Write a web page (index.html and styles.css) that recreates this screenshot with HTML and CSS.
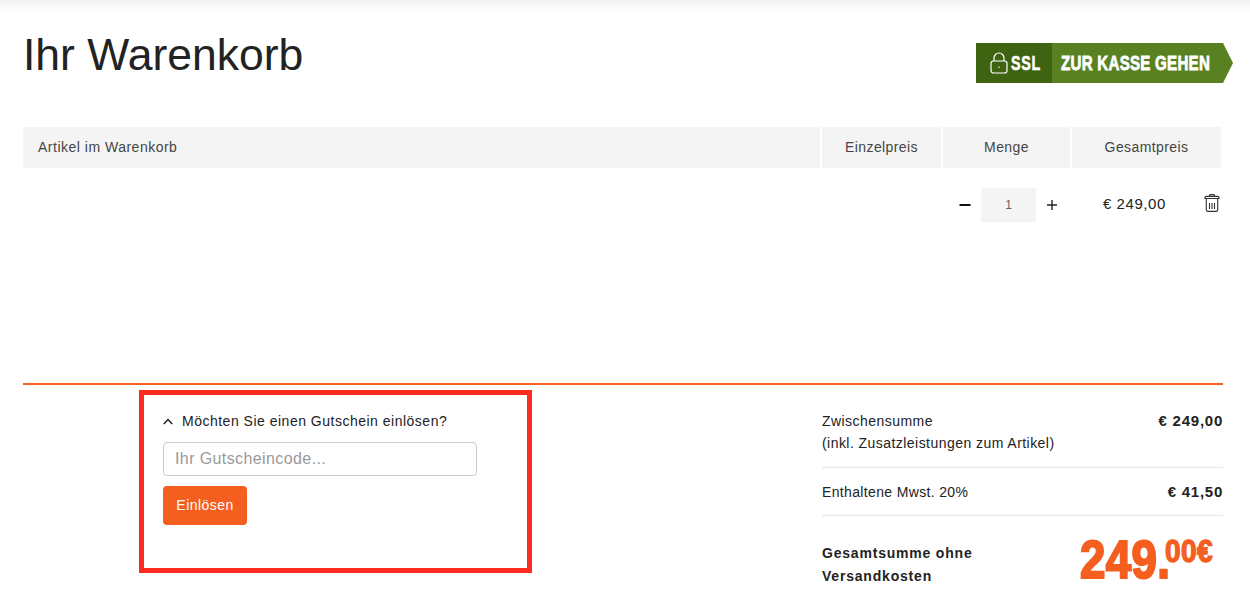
FILE: index.html
```html
<!DOCTYPE html>
<html lang="de">
<head>
<meta charset="utf-8">
<title>Ihr Warenkorb</title>
<link rel="stylesheet" href="styles.css">
</head>
<body>
<div class="topbar"></div>
<main class="page">
  <header class="head">
    <h1 class="title">Ihr Warenkorb</h1>
    <a class="checkout" href="#">
      <span class="ssl">
        <svg class="lock" width="18" height="22" viewBox="0 0 18 22" fill="none" stroke="#fff" stroke-width="1.2">
          <rect x="1" y="9" width="16" height="12" rx="2.5"/>
          <path d="M4 9V6a5 5 0 0 1 10 0v3"/>
          <rect x="8.5" y="14.5" width="1" height="1.5" fill="#fff" stroke="none"/>
        </svg>
        <span class="heavy ssl-text">SSL</span>
      </span>
      <span class="go"><span class="heavy go-text">ZUR KASSE GEHEN</span></span>
    </a>
  </header>

  <div class="thead">
    <div class="th th-item">Artikel im Warenkorb</div>
    <div class="th th-unit">Einzelpreis</div>
    <div class="th th-qty">Menge</div>
    <div class="th th-total">Gesamtpreis</div>
  </div>

  <div class="row">
    <div class="qty">
      <svg class="qty-btn" width="12" height="12" viewBox="0 0 12 12"><path d="M0.5 6h11" stroke="#111" stroke-width="2"/></svg>
      <span class="qty-val">1</span>
      <svg class="qty-btn" width="12" height="12" viewBox="0 0 12 12"><path d="M1 6h10M6 1v10" stroke="#222" stroke-width="1.4"/></svg>
    </div>
    <div class="row-price">€ 249,00</div>
    <svg class="trash" width="16" height="18" viewBox="0 0 16 18" fill="none" stroke="#333" stroke-width="1.1">
      <path d="M1 4.500h14V3.700c0-.8-.6-1.300-1.300-1.300H2.300C1.600 2.400 1 2.900 1 3.700z"/>
      <path d="M5.500 2.400V1.500C5.500 1 6 .6 6.500 .6h3c.5 0 1 .4 1 .9v.9"/>
      <path d="M2.300 4.500v11.200c0 1 .7 1.700 1.700 1.700h8c1 0 1.700-.7 1.700-1.700V4.500"/>
      <path d="M5.500 9v6M8 9v6M10.500 9v6"/>
    </svg>
  </div>

  <section class="bottom">
    <div class="coupon">
      <div class="coupon-label">
        <svg width="10" height="7" viewBox="0 0 10 7" fill="none" stroke="#222" stroke-width="1.500"><path d="M0.800 6L5 1.500 9.200 6"/></svg>
        <span>Möchten Sie einen Gutschein einlösen?</span>
      </div>
      <input class="coupon-input" type="text" placeholder="Ihr Gutscheincode...">
      <button class="coupon-btn" type="button">Einlösen</button>
    </div>

    <div class="summary">
      <div class="sum-row sum-sub">
        <div>Zwischensumme<br>(inkl. Zusatzleistungen zum Artikel)</div>
        <strong class="sum-val">€ 249,00</strong>
      </div>
      <div class="sum-row sum-tax">
        <div>Enthaltene Mwst. 20%</div>
        <strong class="sum-val">€ 41,50</strong>
      </div>
      <div class="sum-row sum-total">
        <strong class="total-label">Gesamtsumme ohne<br>Versandkosten</strong>
        <div class="big"><span class="heavy big-int">249.</span><span class="heavy big-dec">00€</span></div>
      </div>
    </div>
  </section>
</main>
</body>
</html>
```
FILE: styles.css
```css
* { box-sizing: border-box; }
html, body { margin: 0; padding: 0; }
body {
  width: 1250px;
  height: 608px;
  overflow: hidden;
  background: #fff;
  color: #222;
  font-family: "Liberation Sans", Arial, sans-serif;
  font-size: 14px;
}
.topbar { height: 12px; margin-bottom: -12px; background: linear-gradient(#f1f1f1, #fff); }
.page { width: 1200px; margin-left: 23px; }

.head { display: flex; justify-content: space-between; align-items: flex-start; height: 127px; }
.title { margin: 28px 0 0; font-size: 44.5px; line-height: 54px; font-weight: 400; color: #222; }

.heavy {
  font-weight: 700;
  display: block;
  white-space: nowrap;
  transform-origin: left center;
}
.checkout { display: flex; margin: 43px -10px 0 0; width: 257px; height: 40px; text-decoration: none; color: #fff; }
.ssl { width: 76px; background: #3f6411; display: flex; align-items: center; padding-left: 14px; gap: 3px; }
.ssl-text { width: 30px; font-size: 21px; letter-spacing: 1px; transform: scaleX(.68); -webkit-text-stroke: .6px currentColor; }
.go {
  flex: 1;
  background: #598122;
  clip-path: polygon(0 0, 171px 0, 181px 50%, 171px 100%, 0 100%);
  padding-left: 9px;
  display: flex;
  align-items: center;
}
.go-text { width: 149px; font-size: 21px; letter-spacing: .35px; transform: scaleX(.72); -webkit-text-stroke: .8px currentColor; }

.thead { display: flex; gap: 2px; width: 1198px; height: 41px; font-size: 14px; color: #444; }
.th { background: #f4f4f4; display: flex; align-items: center; justify-content: center; letter-spacing: .4px; padding-bottom: 2px; }
.th-item { width: 797px; justify-content: flex-start; padding-left: 15px; letter-spacing: .5px; }
.th-unit { width: 119px; }
.th-qty { width: 127px; }
.th-total { width: 149px; }

.row { display: flex; align-items: center; height: 215px; padding: 20px 3px 161px 0; }
.qty { display: flex; align-items: center; margin-left: 936px; }
.qty-btn { display: block; }
.qty-val {
  width: 55px; height: 34px; margin: 0 10px;
  background: #f4f4f4; color: #666; font-size: 12px;
  display: flex; align-items: center; justify-content: center;
}
.row-price { margin: 0 0 3px 45px; width: 63px; white-space: nowrap; font-size: 15px; letter-spacing: .55px; }
.trash { margin: 0 0 4px 38px; display: block; }

.bottom { display: flex; border-top: 2px solid #f45e1f; height: 224px; padding-top: 5px; }
.coupon {
  width: 393px; height: 183px; margin-left: 116px;
  border: 5px solid #ff2b1c;
  padding: 16px 19px;
  background: #fff;
}
.coupon-label { display: flex; align-items: center; gap: 9px; font-size: 14px; letter-spacing: .5px; line-height: 20px; color: #222; }
.coupon-input {
  display: block; width: 314px; height: 34px; margin-top: 11px; padding: 0 11px;
  border: 1px solid #ccc; border-radius: 4px; background: #fff; outline: 0;
  font: 16px "Liberation Sans", Arial, sans-serif; letter-spacing: .4px;
}
.coupon-input::placeholder { color: #999; opacity: 1; }
.coupon-btn {
  display: block; width: 84px; height: 39px; margin-top: 10px; padding: 0 0 2px;
  border: 0; border-radius: 4px; background: #f45e1f; color: #fff;
  font: 14px "Liberation Sans", Arial, sans-serif; letter-spacing: .45px;
}

.summary { width: 401px; margin-left: 290px; }
.sum-row { display: flex; justify-content: space-between; letter-spacing: .45px; }
.sum-sub { line-height: 22px; padding: 20px 0 13px; border-bottom: 1px solid #e6e6e6; }
.sum-tax { line-height: 20px; padding: 14px 0 13px; border-bottom: 1px solid #e6e6e6; letter-spacing: .35px; }
.sum-val { font-weight: 700; font-size: 15px; letter-spacing: .75px; }
.sum-total { padding-top: 14px; }
.total-label { line-height: 23px; letter-spacing: .8px; padding-top: 12px; }
.big { display: flex; color: #f45e1f; margin-right: 9px; align-items: flex-start; width: 134px; }
.big-int { width: 91px; font-size: 53px; line-height: 60px; transform: scaleX(.86); -webkit-text-stroke: 2.2px currentColor; }
.big-dec { width: 49px; margin: 6px 0 0 -6px; font-size: 32px; line-height: 30px; transform: scaleX(.88); -webkit-text-stroke: 1.300px currentColor; }
```
